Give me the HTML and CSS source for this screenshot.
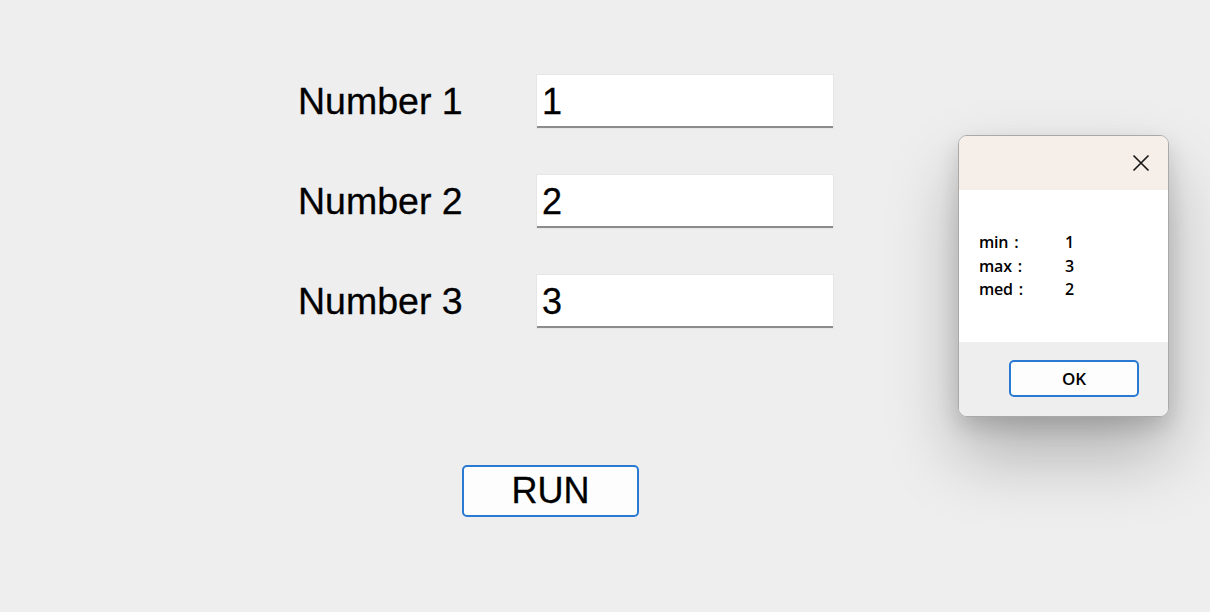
FILE: index.html
```html
<!DOCTYPE html>
<html>
<head>
<meta charset="utf-8">
<link rel="stylesheet" href="styles.css">
</head>
<body>
<div class="form">
  <div class="row">
    <label class="label">Number 1</label>
    <div class="field">1</div>
  </div>
  <div class="row">
    <label class="label">Number 2</label>
    <div class="field">2</div>
  </div>
  <div class="row">
    <label class="label">Number 3</label>
    <div class="field">3</div>
  </div>
  <button class="run">RUN</button>
</div>

<div class="dialog">
  <div class="dlg-title">
    <svg class="close" width="18" height="18" viewBox="0 0 18 18"><path d="M1.5 1.5 L16.5 16.5 M16.5 1.5 L1.5 16.5" stroke="#1a1a1a" stroke-width="1.7" fill="none"/></svg>
  </div>
  <div class="dlg-body">
    <div class="stat"><span class="k">min :</span><span class="v">1</span></div>
    <div class="stat"><span class="k">max :</span><span class="v">3</span></div>
    <div class="stat"><span class="k">med :</span><span class="v">2</span></div>
  </div>
  <div class="dlg-foot">
    <button class="ok">OK</button>
  </div>
</div>
</body>
</html>
```
FILE: styles.css
```css
html, body {
  margin: 0;
  padding: 0;
  background: #eeeeee;
  width: 1210px;
  height: 612px;
  overflow: hidden;
}

.form {
  padding: 75px 0 0 298px;
  display: flex;
  flex-direction: column;
  align-items: flex-start;
  gap: 47px;
  font-family: "Liberation Sans", Arial, sans-serif;
  color: #000;
}

.row {
  display: flex;
  align-items: center;
}

.label {
  width: 239px;
  font-size: 37.5px;
  line-height: 53px;
  -webkit-text-stroke: 0.3px #000;
}

.field {
  width: 291px;
  height: 51px;
  padding-left: 5px;
  background: #ffffff;
  border-bottom: 2px solid #8c8c8c;
  box-shadow: 0 0 0 1px #e6e6e6;
  font-size: 36px;
  line-height: 53px;
  -webkit-text-stroke: 0.3px #000;
}

.run {
  margin-top: 90px;
  margin-left: 164px;
  width: 177px;
  height: 52px;
  background: #fdfdfd;
  border: 2px solid #2a7ad4;
  border-radius: 5px;
  font-family: "Liberation Sans", Arial, sans-serif;
  font-size: 36px;
  line-height: 48px;
  color: #000;
  padding: 0;
  -webkit-text-stroke: 0.3px #000;
}

.dialog {
  position: absolute;
  left: 958px;
  top: 135px;
  width: 209px;
  height: 280px;
  border: 1px solid #a9a9a9;
  border-radius: 9px;
  overflow: hidden;
  display: flex;
  flex-direction: column;
  box-shadow: 0 38px 70px rgba(0, 0, 0, 0.26), 0 10px 22px rgba(0, 0, 0, 0.14);
  font-family: "Open Sans", "Noto Sans", sans-serif;
}

.dlg-title {
  height: 54px;
  background: #f6eee8;
  display: flex;
  justify-content: flex-end;
  align-items: center;
  padding-right: 18px;
}

.close {
  width: 18px;
  height: 18px;
}

.dlg-body {
  height: 152px;
  background: #ffffff;
  padding: 41px 0 0 20px;
  box-sizing: border-box;
}

.stat {
  display: flex;
  font-size: 16px;
  font-weight: 600;
  line-height: 23.5px;
  color: #000;
  word-spacing: 2px;
  letter-spacing: -0.2px;
}

.k {
  width: 86px;
}

.dlg-foot {
  flex: 1;
  background: #eeeeee;
  padding: 18px 0 0 50px;
}

.ok {
  width: 130px;
  height: 37px;
  background: #fdfdfd;
  border: 2px solid #2a7ad4;
  border-radius: 5px;
  font-family: "Open Sans", "Noto Sans", sans-serif;
  font-size: 17px;
  font-weight: 600;
  color: #000;
  padding: 0;
}
```
